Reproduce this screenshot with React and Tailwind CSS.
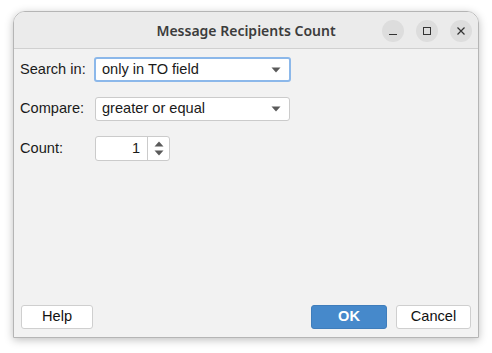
function Combo({ value, focused }) {
  return (
    <div
      className={`flex items-center justify-between bg-white rounded-[3px] pl-[6px] pr-[8px] ${
        focused ? 'h-[25px] w-[197px] border-2 border-[#8cb8ea]' : 'h-[24px] w-[195px] ml-[1px] border border-[#cbcbcb]'
      }`}
    >
      <span className="text-[14.6px] text-[#1a1a1a]">{value}</span>
      <svg width="10" height="6" viewBox="0 0 10 6">
        <path d="M0.5 0.5 L9.5 0.5 L5 5.5 Z" fill="#5a5a5a" />
      </svg>
    </div>
  )
}

function Button({ children, primary, width }) {
  return (
    <button
      className={`h-[24px] rounded-[3px] text-[14.6px] ${width} ${
        primary
          ? 'bg-[#4689cb] border border-[#3f7dbb] text-white font-bold'
          : 'bg-white border border-[#cfcfcf] text-[#111]'
      }`}
    >
      {children}
    </button>
  )
}

export default function App() {
  return (
    <div className="w-[492px] h-[353px] bg-white pt-[11px] pl-[13px]" style={{ fontFamily: '"Liberation Sans", Arial, sans-serif' }}>
      <div className="w-[466px] h-[327px] flex flex-col rounded-t-[12px] border border-[#b5b5b5] shadow-[0_2px_8px_rgba(0,0,0,0.25)] overflow-hidden">
        {/* Title bar */}
        <div className="relative h-[37px] flex items-center justify-center bg-[#ebebeb] border-b border-[#d0d0d0]">
          <span className="text-[14px] font-semibold text-[#3c3c3c]" style={{ fontFamily: '"Noto Sans", "Open Sans", sans-serif' }}>
            Message Recipients Count
          </span>
          <div className="absolute right-[6px] top-[8px] flex gap-[12px]">
            <div className="w-[22px] h-[22px] rounded-full bg-[#dddddd] flex items-end justify-center pb-[7px]">
              <div className="w-[8px] h-[1px] bg-[#333]" />
            </div>
            <div className="w-[22px] h-[22px] rounded-full bg-[#dddddd] flex items-center justify-center">
              <div className="w-[8px] h-[8px] border border-[#333]" />
            </div>
            <div className="w-[22px] h-[22px] rounded-full bg-[#dddddd] flex items-center justify-center">
              <svg width="8" height="8" viewBox="0 0 8 8">
                <path d="M0.5 0.5 L7.5 7.5 M7.5 0.5 L0.5 7.5" stroke="#333" strokeWidth="1.2" />
              </svg>
            </div>
          </div>
        </div>

        {/* Body */}
        <div className="flex-1 flex flex-col bg-[#f2f2f2] px-[6px] pt-[8px] pb-[8px]">
          <div className="flex flex-col gap-[15px] text-[14.6px] text-[#1a1a1a]">
            <div className="flex items-center">
              <span className="w-[74px]">Search in:</span>
              <Combo value="only in TO field" focused />
            </div>
            <div className="flex items-center">
              <span className="w-[74px]">Compare:</span>
              <Combo value="greater or equal" />
            </div>
            <div className="flex items-center">
              <span className="w-[75px]">Count:</span>
              <div className="flex h-[25px] w-[75px] bg-white border border-[#cbcbcb] rounded-[3px]">
                <div className="flex-1 flex items-center justify-end pr-[7px] border-r border-[#cbcbcb]">1</div>
                <div className="w-[21px] flex flex-col items-center justify-center gap-[3px]">
                  <svg width="10" height="6" viewBox="0 0 10 6">
                    <path d="M0.5 5.5 L9.5 5.5 L5 0.5 Z" fill="#5a5a5a" />
                  </svg>
                  <svg width="10" height="6" viewBox="0 0 10 6">
                    <path d="M0.5 0.5 L9.5 0.5 L5 5.5 Z" fill="#5a5a5a" />
                  </svg>
                </div>
              </div>
            </div>
          </div>
          <div className="flex-1" />
          <div className="flex items-center px-[1px]">
            <Button width="w-[72px]">Help</Button>
            <div className="flex-1" />
            <Button primary width="w-[76px]">OK</Button>
            <div className="w-[9px]" />
            <Button width="w-[75px]">Cancel</Button>
          </div>
        </div>
      </div>
    </div>
  )
}
